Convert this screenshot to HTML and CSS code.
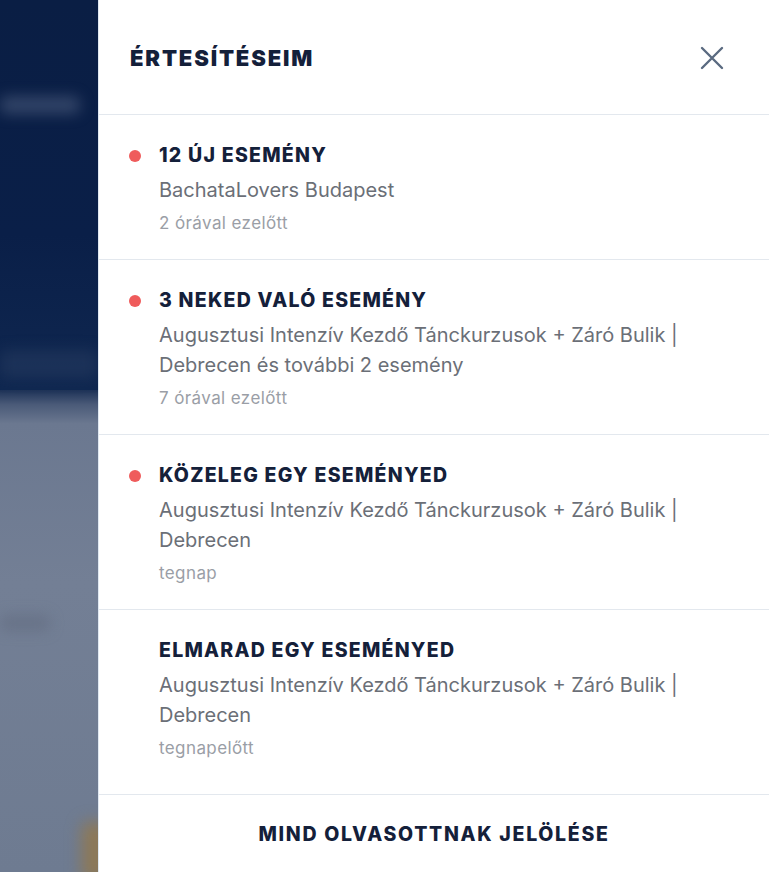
FILE: index.html
```html
<!DOCTYPE html>
<html lang="hu">
<head>
<meta charset="utf-8">
<title>Értesítéseim</title>
<link rel="stylesheet" href="styles.css">
</head>
<body>
<div class="screen">
  <div class="backdrop">
    <div class="bd-top"></div>
    <div class="bd-bottom"></div>
    <div class="blob blob-1"></div>
    <div class="blob blob-2"></div>
    <div class="blob blob-3"></div>
    <div class="blob blob-4"></div>
  </div>
  <aside class="panel">
    <header class="panel-header">
      <h1 class="panel-title">ÉRTESÍTÉSEIM</h1>
      <button class="close-btn" aria-label="Bezárás">
        <svg width="24" height="24" viewBox="0 0 24 24" fill="none" stroke="#5a6a80" stroke-width="2.4" stroke-linecap="round">
          <path d="M2 2L22 22M22 2L2 22"/>
        </svg>
      </button>
    </header>
    <ul class="list">
      <li class="item unread">
        <div class="item-title">12 ÚJ ESEMÉNY</div>
        <div class="item-body">BachataLovers Budapest</div>
        <div class="item-time">2 órával ezelőtt</div>
      </li>
      <li class="item unread">
        <div class="item-title">3 NEKED VALÓ ESEMÉNY</div>
        <div class="item-body">Augusztusi Intenzív Kezdő Tánckurzusok + Záró Bulik | Debrecen és további 2 esemény</div>
        <div class="item-time">7 órával ezelőtt</div>
      </li>
      <li class="item unread">
        <div class="item-title">KÖZELEG EGY ESEMÉNYED</div>
        <div class="item-body">Augusztusi Intenzív Kezdő Tánckurzusok + Záró Bulik | Debrecen</div>
        <div class="item-time">tegnap</div>
      </li>
      <li class="item last">
        <div class="item-title">ELMARAD EGY ESEMÉNYED</div>
        <div class="item-body">Augusztusi Intenzív Kezdő Tánckurzusok + Záró Bulik | Debrecen</div>
        <div class="item-time">tegnapelőtt</div>
      </li>
    </ul>
    <footer class="panel-footer">
      <button class="mark-all">MIND OLVASOTTNAK JELÖLÉSE</button>
    </footer>
  </aside>
</div>
</body>
</html>
```
FILE: styles.css
```css
* { box-sizing: border-box; }
html, body { margin: 0; padding: 0; }
body {
  width: 769px;
  height: 872px;
  overflow: hidden;
  font-family: "Inter", "Noto Sans", "Liberation Sans", sans-serif;
  background: #ffffff;
}
.screen {
  display: flex;
  width: 769px;
  height: 872px;
}
.backdrop {
  position: relative;
  width: 98px;
  flex: 0 0 98px;
  display: flex;
  flex-direction: column;
  overflow: hidden;
}
.bd-top {
  height: 390px;
  background: linear-gradient(180deg, #0a1e44 0%, #0a1f48 60%, #0f2750 100%);
}
.bd-bottom {
  flex: 1;
  background: linear-gradient(180deg, #1d3257 0%, #4a5a78 3%, #6b7890 7%, #737f95 40%, #6e7b91 100%);
}
.blob {
  position: absolute;
  filter: blur(7px);
  border-radius: 6px;
}
.blob-1 { left: 0; top: 96px; width: 80px; height: 18px; background: rgba(110, 125, 155, 0.4); }
.blob-2 { left: 0; top: 350px; width: 98px; height: 28px; background: rgba(45, 65, 100, 0.45); }
.blob-3 { left: 0; top: 615px; width: 50px; height: 16px; background: rgba(90, 100, 120, 0.45); }
.blob-4 { left: 82px; top: 822px; width: 26px; height: 60px; background: rgba(150, 120, 70, 0.8); filter: blur(8px); }

.panel {
  flex: 1;
  display: flex;
  flex-direction: column;
  background: #ffffff;
  border-left: 1px solid #dfe8f1;
  min-width: 0;
}
.panel-header {
  height: 115px;
  flex: 0 0 115px;
  display: flex;
  align-items: center;
  justify-content: space-between;
  padding: 0 45px 0 31px;
  border-bottom: 1px solid #e3e8ee;
}
.panel-title {
  margin: 0;
  font-size: 22px;
  font-weight: 900;
  letter-spacing: 1.85px;
  color: #14203a;
  line-height: 28px;
  position: relative;
  top: 1px;
}
.close-btn {
  background: none;
  border: 0;
  padding: 0;
  width: 24px;
  height: 24px;
  display: flex;
  align-items: center;
  justify-content: center;
  cursor: pointer;
  position: relative;
  top: 1px;
}
.list {
  list-style: none;
  margin: 0;
  padding: 0;
}
.item {
  position: relative;
  padding: 28px 30px 25px 60px;
  border-bottom: 1px solid #e3e8ee;
}
.item.last { padding-bottom: 35px; }
.item.unread::before {
  content: "";
  position: absolute;
  left: 30px;
  top: 35px;
  width: 12px;
  height: 12px;
  border-radius: 50%;
  background: #ef5b5b;
}
.item-title {
  font-size: 19.5px;
  font-weight: 800;
  letter-spacing: 1.25px;
  line-height: 24px;
  color: #14203a;
}
.item-body {
  margin-top: 8px;
  font-size: 20px;
  line-height: 30px;
  color: #6b6f77;
}
.item-time {
  margin-top: 7px;
  font-size: 17px;
  letter-spacing: 0.4px;
  line-height: 22px;
  color: #9a9ea6;
}
.panel-footer {
  flex: 1;
  display: flex;
  align-items: flex-start;
  justify-content: center;
  padding-top: 27px;
}
.mark-all {
  background: none;
  border: 0;
  padding: 0;
  font-family: inherit;
  font-size: 19.5px;
  font-weight: 800;
  letter-spacing: 1.7px;
  line-height: 24px;
  color: #14203a;
  cursor: pointer;
}
```
